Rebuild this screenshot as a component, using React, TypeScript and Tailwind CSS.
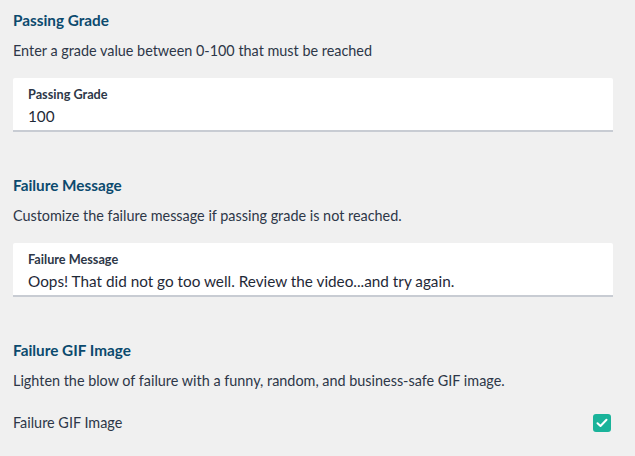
import React from "react";

const font = { fontFamily: "Lato, 'Noto Sans', sans-serif" };

function Section({
  title,
  description,
  children,
}: {
  title: string;
  description: string;
  children: React.ReactNode;
}) {
  return (
    <div className="flex flex-col">
      <h3 className="text-[15.3px] font-bold leading-[20px] text-[#0b4a6e]">{title}</h3>
      <p className="mt-[11px] text-[14.4px] leading-[20px] text-[#2d3748]">{description}</p>
      {children}
    </div>
  );
}

function TextField({ label, value }: { label: string; value: string }) {
  return (
    <div className="mt-[17px] flex h-[54px] flex-col justify-center rounded-t-[2px] border-b-2 border-[#c8ccd3] bg-white px-[15px] pt-[2px]">
      <span className="text-[12.7px] font-bold leading-[16px] text-[#2d3748]">{label}</span>
      <span className="mt-[5px] text-[15.3px] leading-[18px] text-[#1f2937]">{value}</span>
    </div>
  );
}

export default function App() {
  return (
    <div className="min-h-[456px] w-[635px] bg-[#f0f0f0] pl-[13px] pr-[22px] pt-[10px]" style={font}>
      <Section title="Passing Grade" description="Enter a grade value between 0-100 that must be reached">
        <TextField label="Passing Grade" value="100" />
      </Section>

      <div className="mt-[43px]">
        <Section
          title="Failure Message"
          description="Customize the failure message if passing grade is not reached."
        >
          <TextField
            label="Failure Message"
            value="Oops! That did not go too well. Review the video...and try again."
          />
        </Section>
      </div>

      <div className="mt-[43px]">
        <Section
          title="Failure GIF Image"
          description="Lighten the blow of failure with a funny, random, and business-safe GIF image."
        >
          <div className="mt-[22px] flex items-center justify-between">
            <span className="text-[14.4px] leading-[20px] text-[#2d3748]">Failure GIF Image</span>
            <span className="mr-[2px] flex h-[18px] w-[18px] items-center justify-center rounded-[3px] bg-[#1ab39a]">
              <svg width="12" height="10" viewBox="0 0 12 10" fill="none">
                <path d="M1.5 5.2 L4.5 8 L10.5 1.8" stroke="white" strokeWidth="2" strokeLinecap="round" strokeLinejoin="round" />
              </svg>
            </span>
          </div>
        </Section>
      </div>
    </div>
  );
}
